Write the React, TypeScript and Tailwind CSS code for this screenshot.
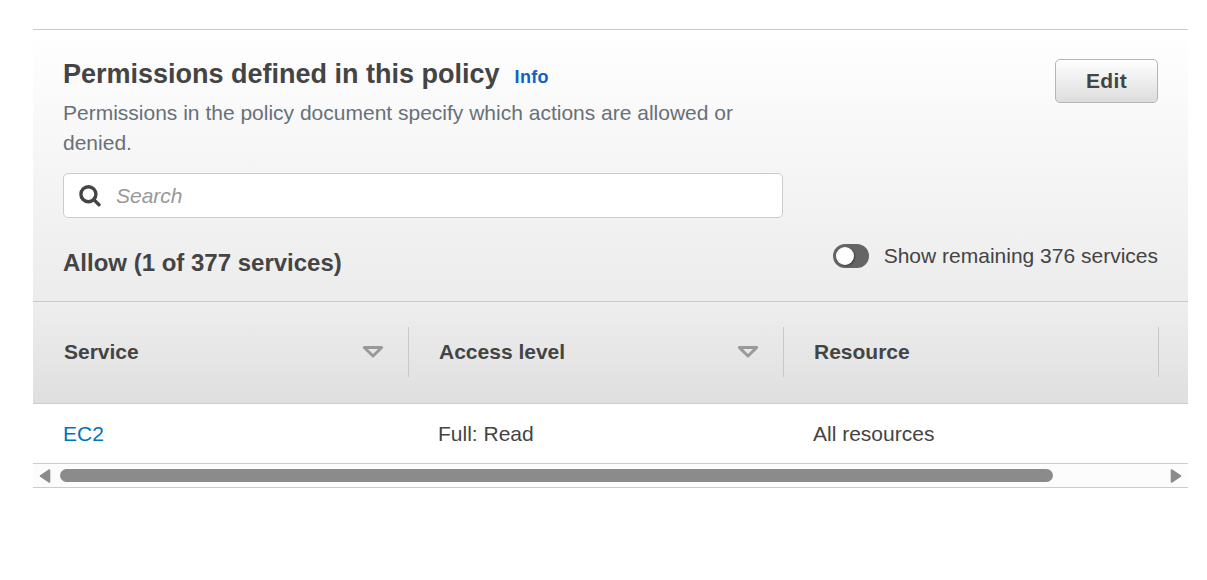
import React from "react";

const columns = [
  { label: "Service", sortable: true },
  { label: "Access level", sortable: true },
  { label: "Resource", sortable: false },
];

function SearchIcon() {
  return (
    <svg className="h-6 w-6 shrink-0" viewBox="0 0 24 24" fill="none" stroke="#444444" strokeWidth="3.4">
      <circle cx="10.4" cy="10.2" r="7.5" />
      <path d="M15.8 15.6 L21 20.8" strokeWidth="3.4" strokeLinecap="round" />
    </svg>
  );
}

function SortIcon() {
  return (
    <svg className="h-6 w-6" viewBox="0 0 24 24" fill="none" stroke="#999999" strokeWidth="3" strokeLinejoin="round">
      <path d="M3.3 7.5 H20.7 L12 16 Z" />
    </svg>
  );
}

function Toggle() {
  return (
    <button role="switch" aria-checked="false" className="flex h-6 w-9 items-center rounded-full bg-[#656565] pl-[3px]">
      <span className="h-[18px] w-[18px] rounded-full bg-white shadow-[1px_1px_2px_rgba(0,0,0,0.4)]" />
    </button>
  );
}

export default function App() {
  return (
    <main className="h-[580px] w-[1207px] bg-white pl-[33px] pt-[29px] font-['Liberation_Sans',Arial,sans-serif] text-[21px] leading-[30px] text-[#444444]">
      <section className="w-[1155px] border-y border-[#cccccc]">
        <header className="h-[271px] bg-linear-to-b from-white to-[#ececec] px-[30px] pt-[29px]">
          <div className="flex h-[114px] justify-between">
            <div className="w-[720px]">
              <div className="flex h-[39px] items-baseline gap-[15px]">
                <h2 className="text-[27px] font-bold leading-[30px]">Permissions defined in this policy</h2>
                <a className="text-[18px] font-bold tracking-[0.3px] text-[#0f62bf]">Info</a>
              </div>
              <p className="text-[#687078]">Permissions in the policy document specify which actions are allowed or denied.</p>
            </div>
            <button className="h-11 w-[103px] rounded-[5px] border border-[#b5b5b5] bg-linear-to-b from-white to-[#dddddd] font-bold tracking-[0.375px]">
              Edit
            </button>
          </div>
          <label className="flex h-[45px] w-[720px] items-center gap-[14px] rounded-[5px] border border-[#cccccc] bg-white pl-[14px]">
            <SearchIcon />
            <span className="italic text-[#999999]">Search</span>
          </label>
          <div className="flex items-start justify-between pt-[23px]">
            <h3 className="pt-[7px] text-[24px] font-bold leading-[30px]">Allow (1 of 377 services)</h3>
            <div className="flex items-center gap-[15px]">
              <Toggle />
              <span>Show remaining 376 services</span>
            </div>
          </div>
        </header>
        <div className="flex h-[103px] items-start border-y border-[#cccccc] bg-linear-to-b from-[#eeeeee] to-[#dfdfdf] pt-[25px]">
          {columns.map((column) => (
            <div
              key={column.label}
              className="flex h-[50px] w-[375px] items-center justify-between border-r border-[#c8c8c8] pl-[30px] pr-[23px] font-bold first:w-[376px] first:pl-[31px]"
            >
              <span>{column.label}</span>
              {column.sortable && <SortIcon />}
            </div>
          ))}
        </div>
        <div className="grid h-[59px] grid-cols-[375px_375px_1fr] items-center *:pl-[30px]">
          <a className="text-[#0073bb]">EC2</a>
          <span>Full: Read</span>
          <span>All resources</span>
        </div>
        <div className="flex h-6 items-center border-t border-[#cccccc] bg-[#fcfcfc] px-[6px]">
          <svg className="h-4 w-3" viewBox="0 0 12 16" fill="#8b8b8b">
            <path d="M10.5 2 V14 L1.5 8 Z" stroke="#8b8b8b" strokeWidth="1.6" strokeLinejoin="round" />
          </svg>
          <div className="ml-[9px] h-[13px] w-[993px] rounded-full bg-[#8b8b8b]" />
          <svg className="ml-auto h-4 w-3" viewBox="0 0 12 16" fill="#8b8b8b">
            <path d="M1.5 2 V14 L10.5 8 Z" stroke="#8b8b8b" strokeWidth="1.6" strokeLinejoin="round" />
          </svg>
        </div>
      </section>
    </main>
  );
}
